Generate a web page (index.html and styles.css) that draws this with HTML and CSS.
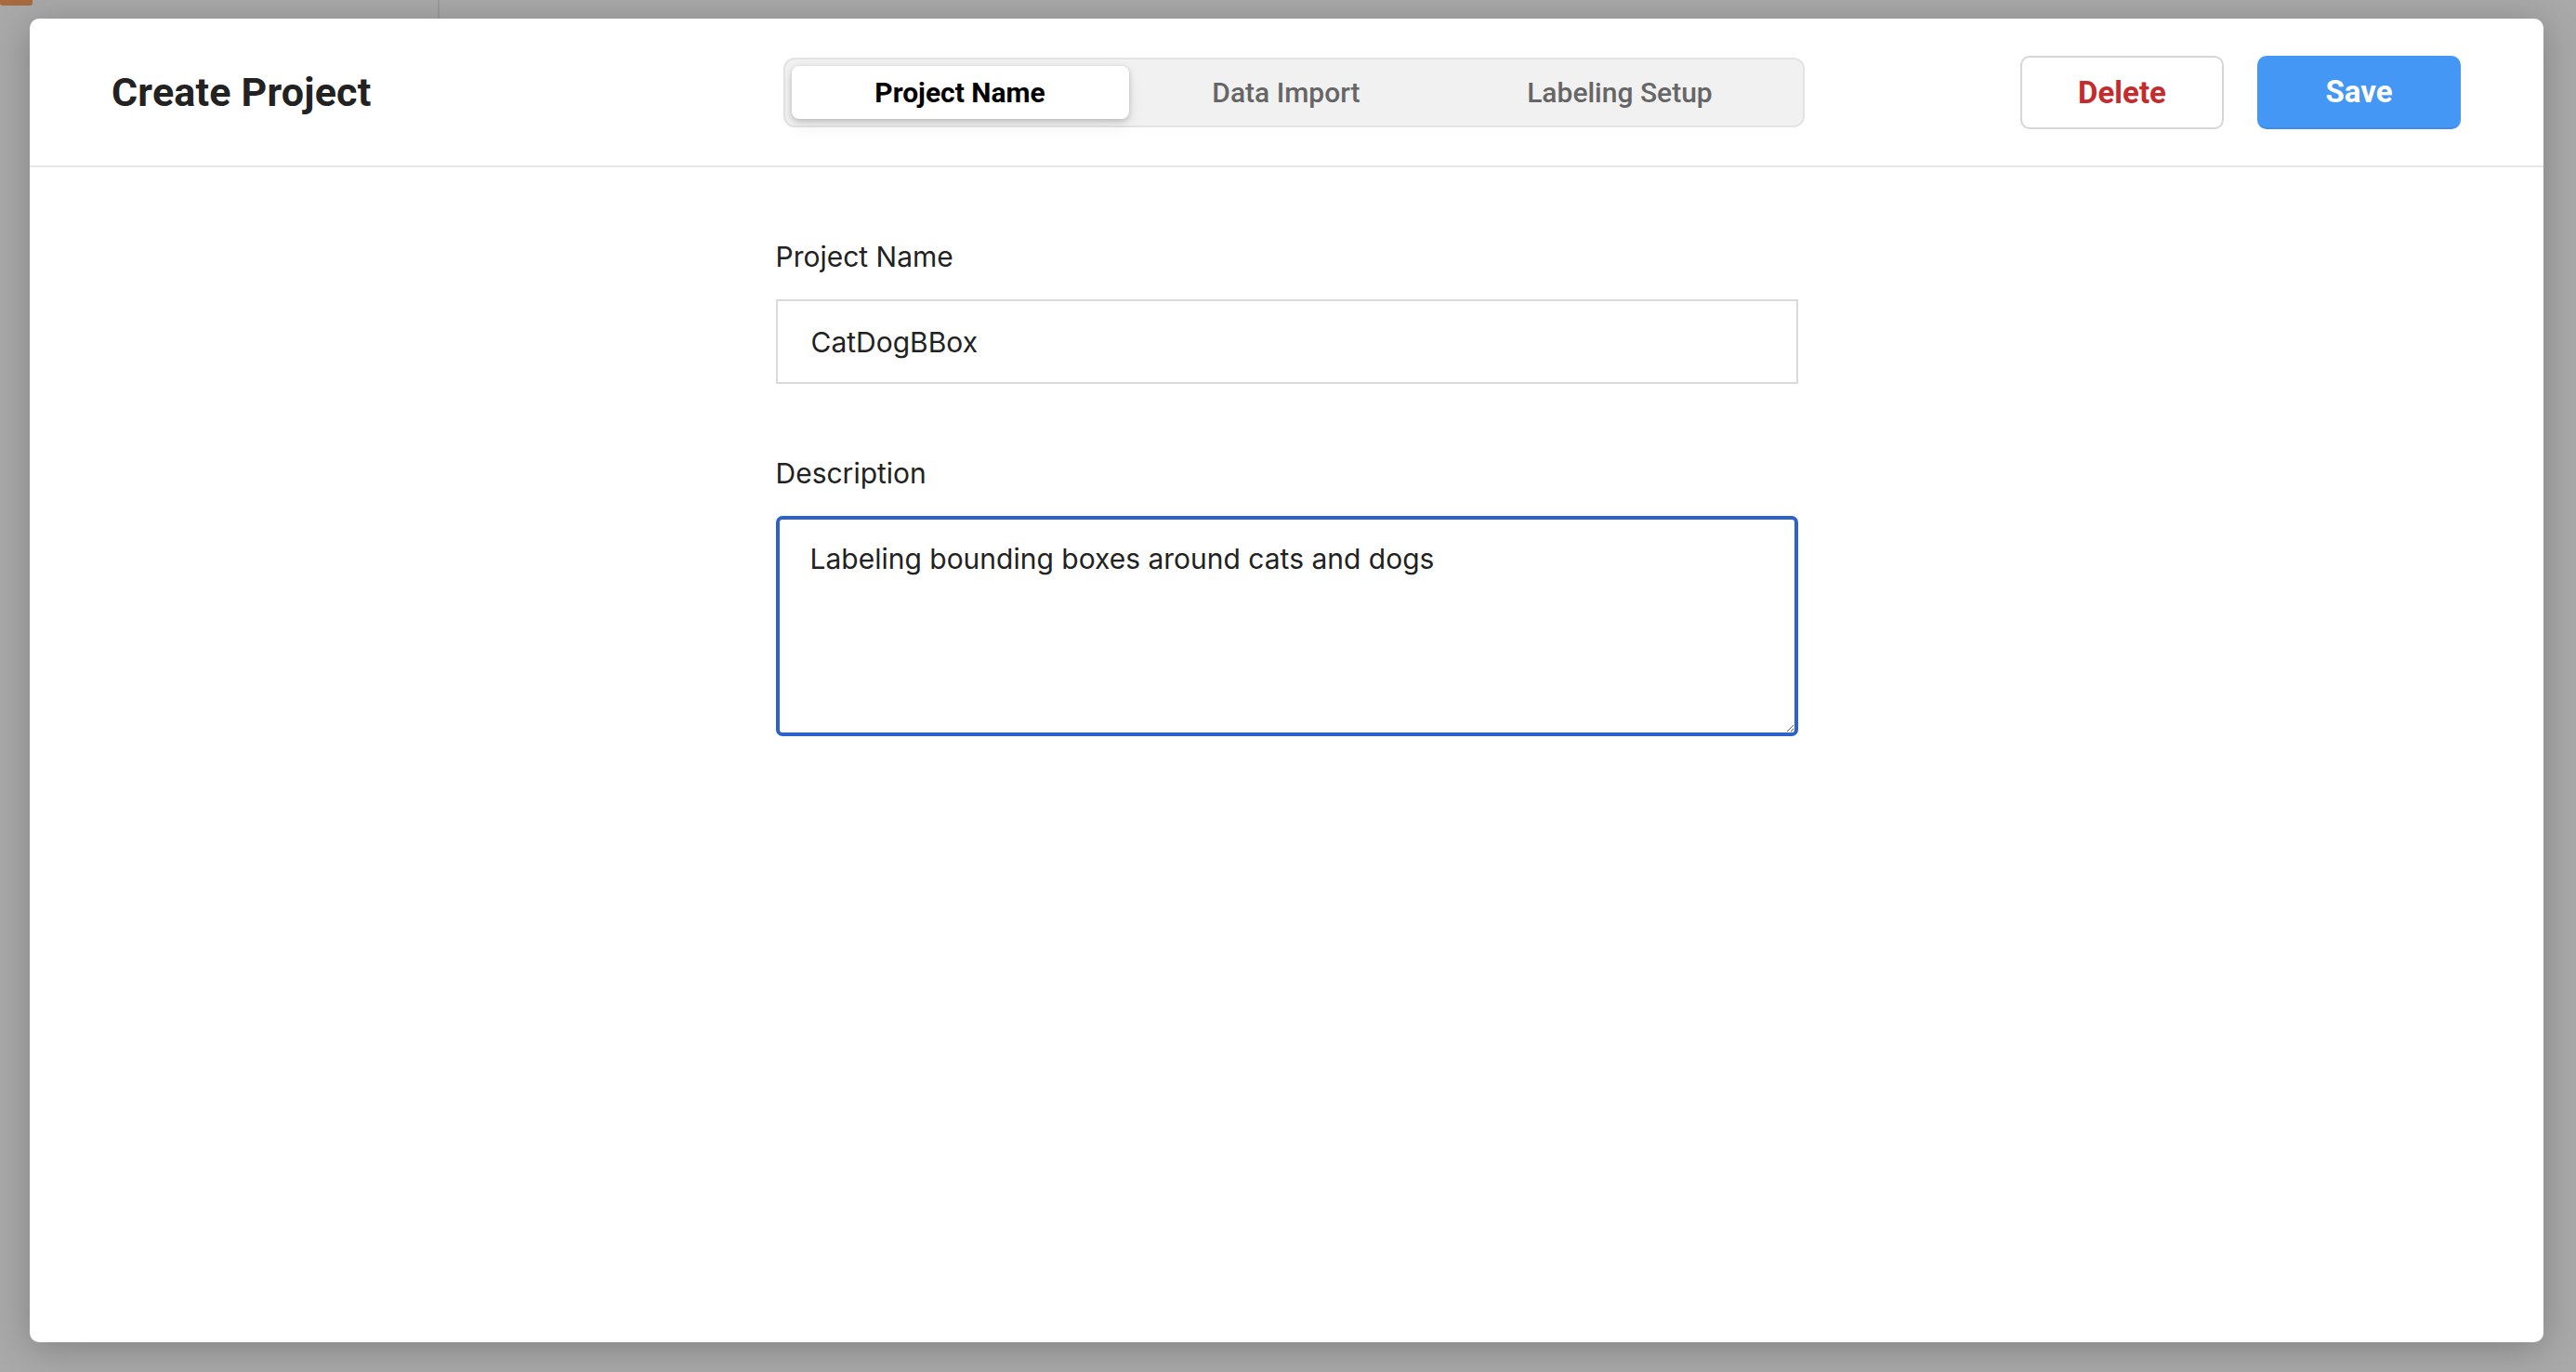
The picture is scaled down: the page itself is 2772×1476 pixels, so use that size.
FILE: index.html
```html
<!DOCTYPE html>
<html lang="en">
<head>
<meta charset="utf-8">
<title>Create Project</title>
<link rel="stylesheet" href="styles.css">
</head>
<body>
<div class="app">
  <div class="app-top">
    <div class="app-brand"><div class="app-logo"></div></div>
    <div class="app-topmain"></div>
  </div>
</div>
<div class="overlay">
  <section class="modal">
    <header class="modal-header">
      <h1 class="modal-title">Create Project</h1>
      <nav class="tabs">
        <button class="tab tab-active">Project Name</button>
        <button class="tab">Data Import</button>
        <button class="tab">Labeling Setup</button>
      </nav>
      <div class="actions">
        <button class="btn btn-delete">Delete</button>
        <button class="btn btn-save">Save</button>
      </div>
    </header>
    <div class="modal-body">
      <form class="form">
        <label class="field-label" for="pname">Project Name</label>
        <input class="field-input" id="pname" type="text" value="CatDogBBox">
        <label class="field-label field-label-gap" for="pdesc">Description</label>
        <textarea class="field-textarea" id="pdesc">Labeling bounding boxes around cats and dogs</textarea>
      </form>
    </div>
  </section>
</div>
</body>
</html>
```
FILE: styles.css
```css
* { box-sizing: border-box; }
html, body { margin: 0; padding: 0; }
body {
  width: 2772px;
  height: 1476px;
  position: relative;
  overflow: hidden;
  background: #a9a9a9;
  font-family: Roboto, "Noto Sans", sans-serif;
}
.app {
  display: flex;
  flex-direction: column;
  height: 100%;
}
.app-top {
  display: flex;
  height: 40px;
}
.app-brand {
  width: 473px;
  border-right: 2px solid #9c9c9c;
}
.app-logo {
  width: 35px;
  height: 6px;
  background: #a86b40;
  border-radius: 0 0 3px 3px;
}
.app-topmain { flex: 1; }

.overlay {
  position: absolute;
  inset: 0;
  display: flex;
  padding: 20px 35px 32px 32px;
}
.modal {
  flex: 1;
  display: flex;
  flex-direction: column;
  background: #fff;
  border-radius: 10px;
  box-shadow: 0 6px 40px rgba(0, 0, 0, 0.24);
}
.modal-header {
  height: 160px;
  border-bottom: 2px solid #e6e6e6;
  display: grid;
  grid-template-columns: 1fr auto 1fr;
  align-items: center;
  padding: 0 89px 0 88px;
}
.modal-title {
  margin: 0;
  font-family: Roboto, sans-serif;
  font-weight: 700;
  font-size: 43px;
  color: #222;
  letter-spacing: 0.2px;
}
.tabs {
  display: flex;
  width: 1099px;
  height: 75px;
  margin-left: 16px;
  padding: 7px;
  background: #f1f1f1;
  border: 2px solid #e3e3e3;
  border-radius: 12px;
}
.tab {
  flex: 1 1 auto;
  border: 0;
  background: transparent;
  font-family: Roboto, sans-serif;
  font-size: 30px;
  font-weight: 500;
  color: #666;
  border-radius: 8px;
  padding: 0;
  cursor: pointer;
}
.tab-active {
  background: #fff;
  color: #000;
  font-weight: 700;
  box-shadow: 0 2px 6px rgba(0, 0, 0, 0.22), 0 8px 20px rgba(0, 0, 0, 0.06);
}
.actions {
  justify-self: end;
  display: flex;
  gap: 36px;
}
.btn {
  width: 219px;
  height: 79px;
  border-radius: 10px;
  font-family: Roboto, sans-serif;
  font-size: 33px;
  font-weight: 700;
  cursor: pointer;
}
.btn-delete {
  background: #fff;
  border: 2px solid #d6d6d6;
  color: #c42b2c;
}
.btn-save {
  background: #4597f6;
  border: 0;
  border-bottom: 2px solid #3f8be6;
  color: #fff;
}

.modal-body {
  flex: 1;
  padding-top: 78px;
}
.form {
  width: 1100px;
  margin: 0 auto;
  display: flex;
  flex-direction: column;
}
.field-label {
  font-family: Inter, "Liberation Sans", sans-serif;
  font-size: 30px;
  line-height: 36px;
  color: #222;
  margin-bottom: 28px;
}
.field-label-gap { margin-top: 78px; }
.field-input {
  height: 91px;
  border: 2px solid #dadada;
  border-radius: 0;
  padding: 0 36px;
  font-family: Inter, "Liberation Sans", sans-serif;
  font-size: 30px;
  color: #222;
  outline: none;
}
.field-textarea {
  height: 237px;
  border: 4px solid #2c62c9;
  border-radius: 7px;
  padding: 24px 33px 22px;
  font-family: Inter, "Liberation Sans", sans-serif;
  font-size: 30px;
  line-height: 36px;
  color: #222;
  outline: none;
  resize: vertical;
}
```
